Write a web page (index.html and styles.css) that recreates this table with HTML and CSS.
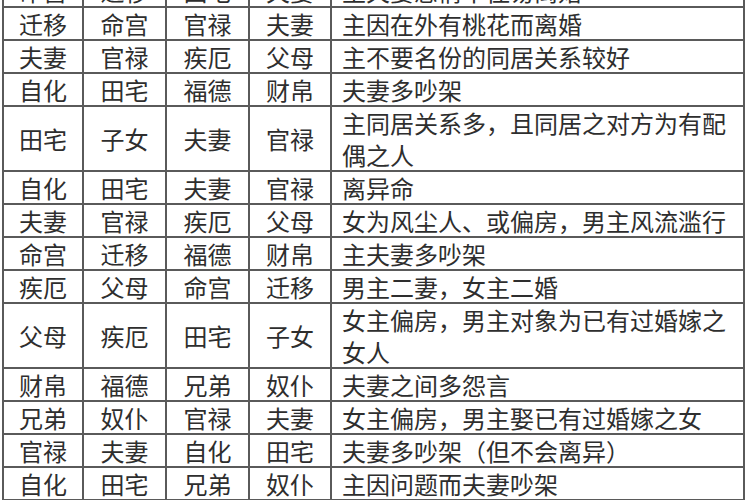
FILE: index.html
```html
<!DOCTYPE html>
<html lang="zh-CN">
<head>
<meta charset="utf-8">
<title>四化表</title>
<link rel="stylesheet" href="styles.css">
</head>
<body>
<table class="grid">
  <colgroup>
    <col class="c1"><col class="c2"><col class="c3"><col class="c4"><col class="c5">
  </colgroup>
  <tbody>
    <tr><td>命宫</td><td>迁移</td><td>田宅</td><td>夫妻</td><td class="desc">主夫妻感情不佳易离婚</td></tr>
    <tr><td>迁移</td><td>命宫</td><td>官禄</td><td>夫妻</td><td class="desc">主因在外有桃花而离婚</td></tr>
    <tr><td>夫妻</td><td>官禄</td><td>疾厄</td><td>父母</td><td class="desc">主不要名份的同居关系较好</td></tr>
    <tr><td>自化</td><td>田宅</td><td>福德</td><td>财帛</td><td class="desc">夫妻多吵架</td></tr>
    <tr class="tall"><td>田宅</td><td>子女</td><td>夫妻</td><td>官禄</td><td class="desc">主同居关系多，且同居之对方为有配<br>偶之人</td></tr>
    <tr><td>自化</td><td>田宅</td><td>夫妻</td><td>官禄</td><td class="desc">离异命</td></tr>
    <tr><td>夫妻</td><td>官禄</td><td>疾厄</td><td>父母</td><td class="desc">女为风尘人、或偏房，男主风流滥行</td></tr>
    <tr><td>命宫</td><td>迁移</td><td>福德</td><td>财帛</td><td class="desc">主夫妻多吵架</td></tr>
    <tr><td>疾厄</td><td>父母</td><td>命宫</td><td>迁移</td><td class="desc">男主二妻，女主二婚</td></tr>
    <tr class="tall"><td>父母</td><td>疾厄</td><td>田宅</td><td>子女</td><td class="desc">女主偏房，男主对象为已有过婚嫁之<br>女人</td></tr>
    <tr><td>财帛</td><td>福德</td><td>兄弟</td><td>奴仆</td><td class="desc">夫妻之间多怨言</td></tr>
    <tr><td>兄弟</td><td>奴仆</td><td>官禄</td><td>夫妻</td><td class="desc">女主偏房，男主娶已有过婚嫁之女</td></tr>
    <tr><td>官禄</td><td>夫妻</td><td>自化</td><td>田宅</td><td class="desc">夫妻多吵架（但不会离异）</td></tr>
    <tr><td>自化</td><td>田宅</td><td>兄弟</td><td>奴仆</td><td class="desc">主因问题而夫妻吵架</td></tr>
  </tbody>
</table>
</body>
</html>
```
FILE: styles.css
```css
html, body {
  margin: 0;
  padding: 0;
  background: #ffffff;
  overflow: hidden;
}

body {
  width: 750px;
  height: 500px;
}

.grid {
  margin: -27px 0 0 2px;
  border-collapse: separate;
  border-spacing: 0;
  border-left: 2px solid #5a5a5a;
  border-top: 2px solid #5a5a5a;
  table-layout: fixed;
  width: 743px;
  font-family: "Noto Sans CJK SC", "Noto Sans CJK TC", sans-serif;
  font-size: 24px;
  color: #2e2e2e;
}

.c1 { width: 80px; }
.c2 { width: 83px; }
.c3 { width: 83px; }
.c4 { width: 82px; }
.c5 { width: 413px; }

.grid td {
  border-right: 2px solid #5a5a5a;
  border-bottom: 2px solid #5a5a5a;
  padding: 0;
  line-height: 31px;
  height: 31px;
  text-align: center;
  vertical-align: middle;
  white-space: nowrap;
  font-weight: 400;
}

.grid td.desc {
  text-align: left;
  padding-left: 10px;
}

.grid .tall td {
  height: 63px;
  line-height: 31.5px;
}
```
